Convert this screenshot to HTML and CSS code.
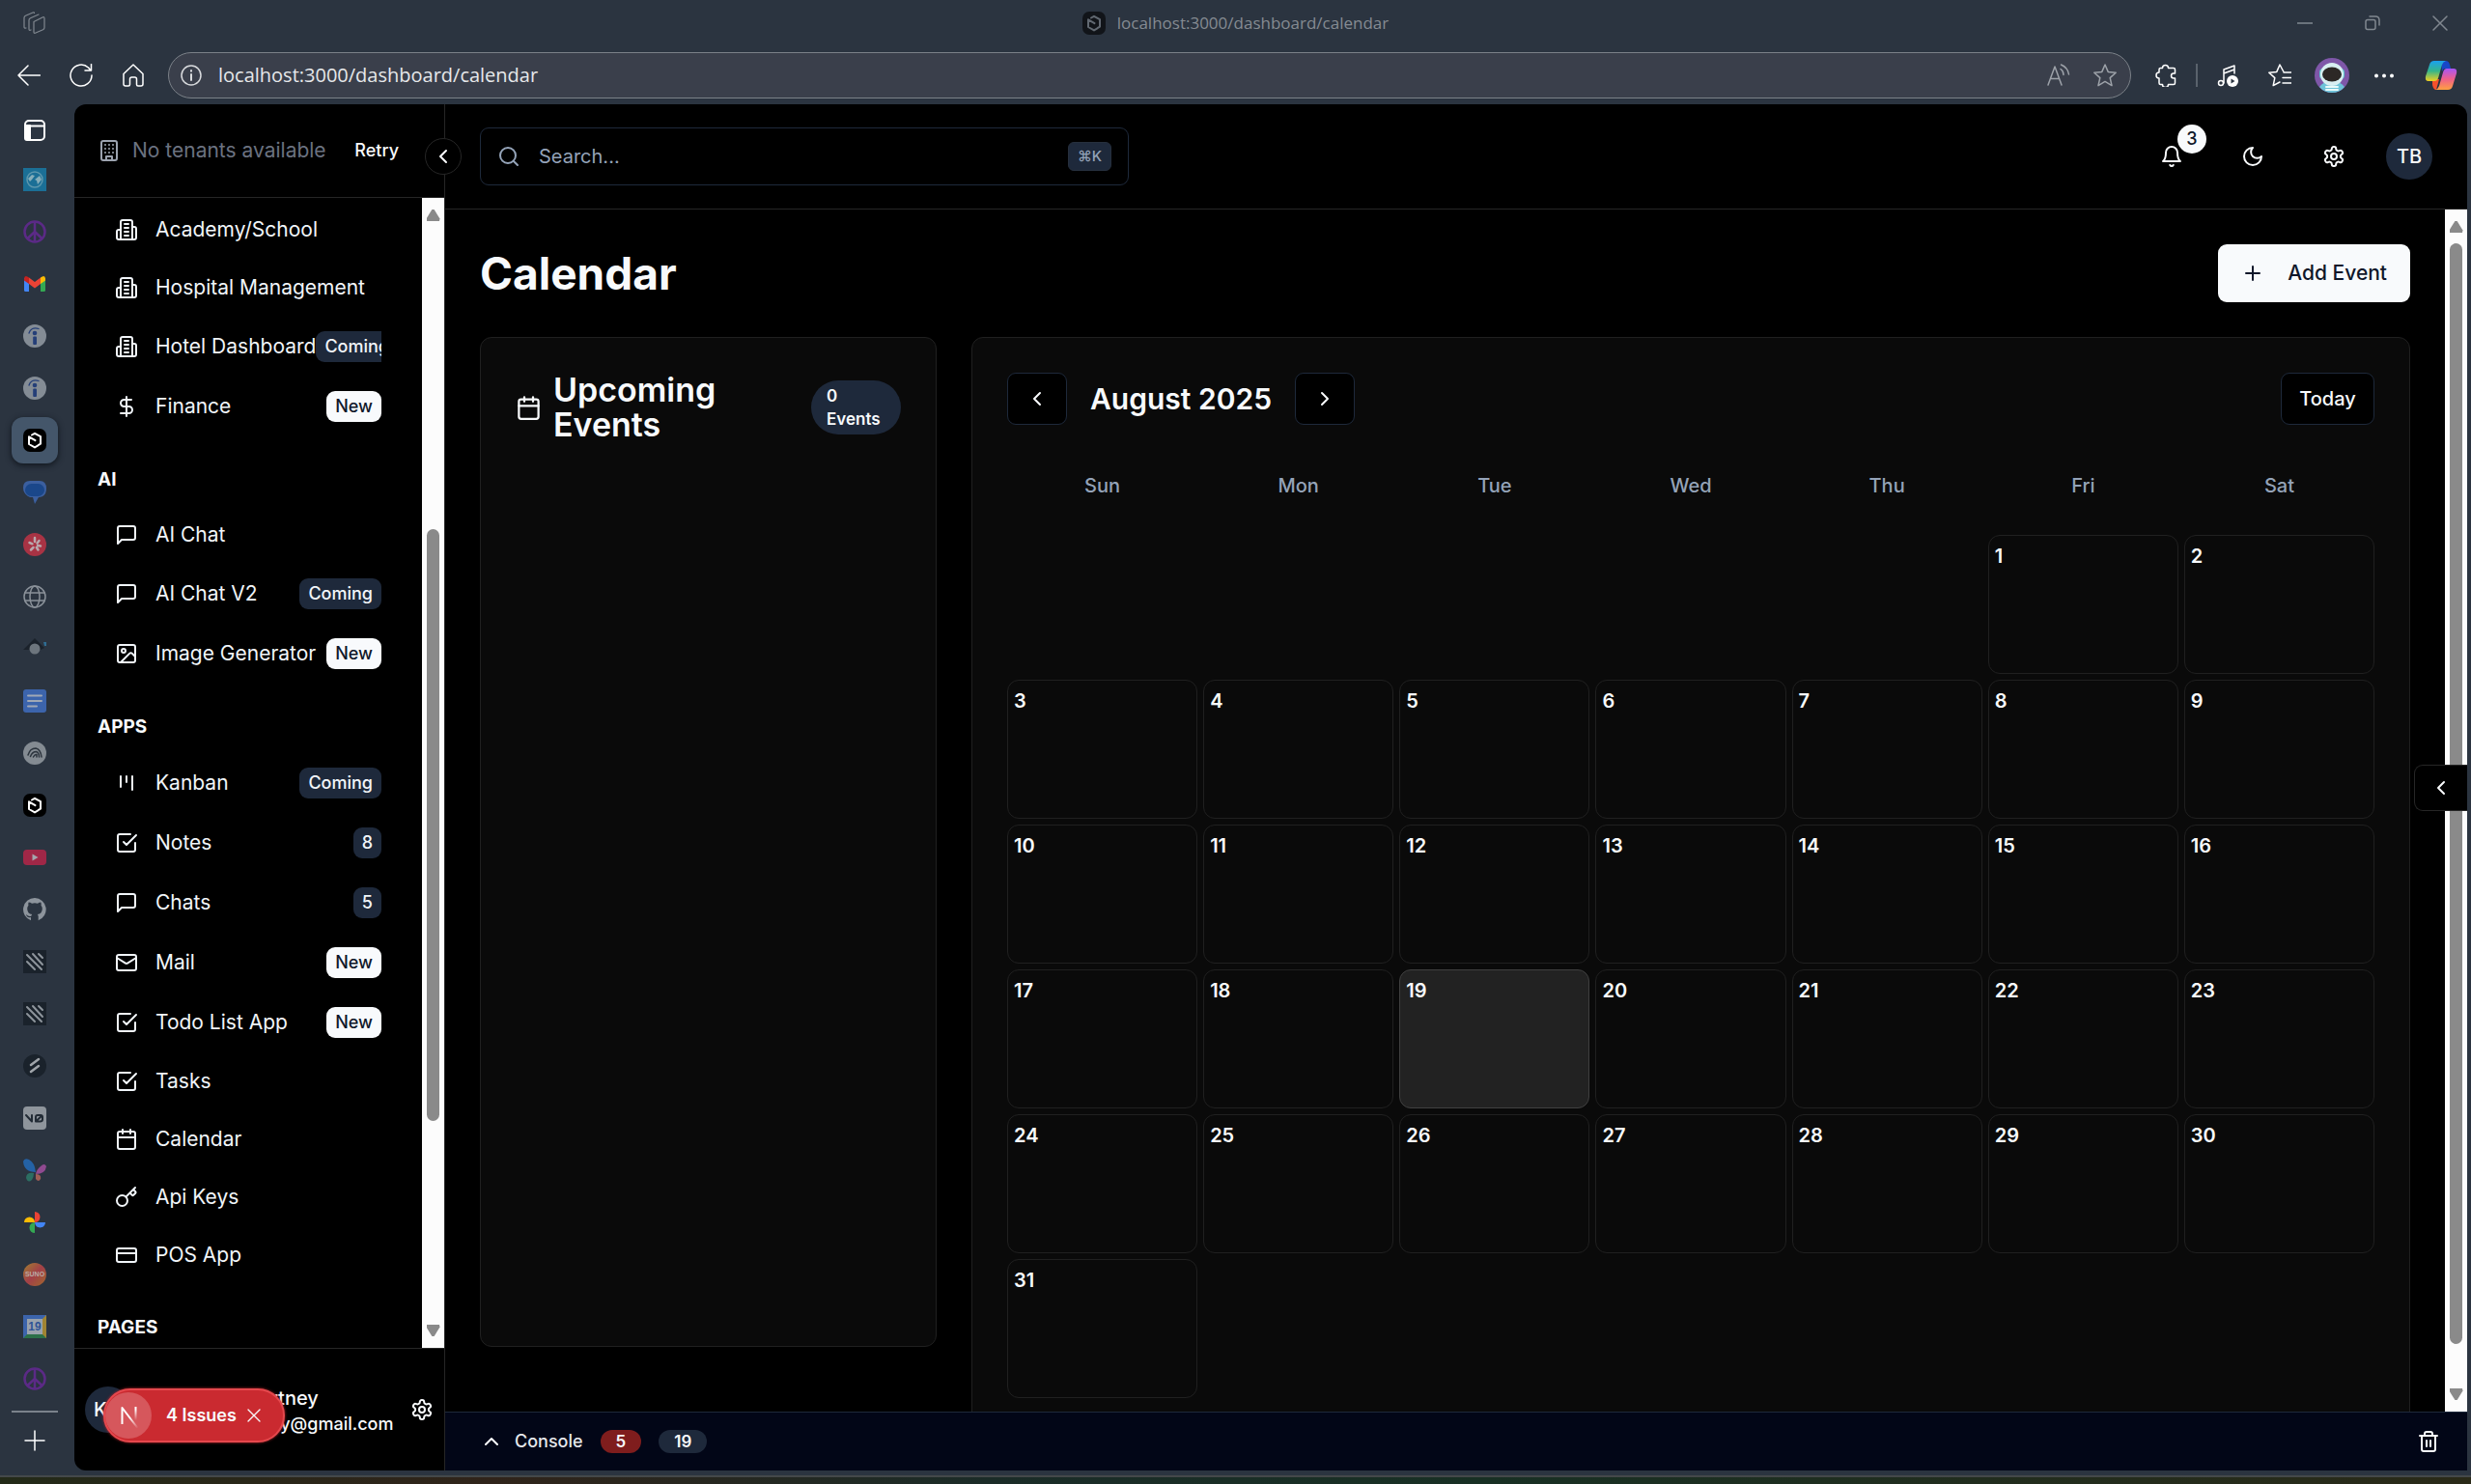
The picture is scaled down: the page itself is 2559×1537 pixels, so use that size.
FILE: index.html
```html
<!DOCTYPE html>
<html lang="en">
<head>
<meta charset="utf-8">
<title>localhost:3000/dashboard/calendar</title>
<meta name="viewport" content="width=device-width, initial-scale=1">
<link rel="stylesheet" href="styles.css">
</head>
<body>
<svg class="sprite" aria-hidden="true">
  <symbol id="building2" viewBox="0 0 24 24"><path d="M6 22V4a2 2 0 0 1 2-2h8a2 2 0 0 1 2 2v18ZM6 12H4a2 2 0 0 0-2 2v6a2 2 0 0 0 2 2h2M18 9h2a2 2 0 0 1 2 2v9a2 2 0 0 1-2 2h-2M10 6h4M10 10h4M10 14h4M10 18h4"/></symbol>
  <symbol id="building" viewBox="0 0 24 24"><rect x="4" y="2" width="16" height="20" rx="2"/><path d="M9 22v-4h6v4M8 6h.01M16 6h.01M12 6h.01M12 10h.01M12 14h.01M16 10h.01M16 14h.01M8 10h.01M8 14h.01"/></symbol>
  <symbol id="dollar" viewBox="0 0 24 24"><path d="M12 2v20M17 5H9.500a3.500 3.500 0 0 0 0 7h5a3.500 3.500 0 0 1 0 7H6"/></symbol>
  <symbol id="message" viewBox="0 0 24 24"><path d="M21 15a2 2 0 0 1-2 2H7l-4 4V5a2 2 0 0 1 2-2h14a2 2 0 0 1 2 2z"/></symbol>
  <symbol id="image" viewBox="0 0 24 24"><rect x="3" y="3" width="18" height="18" rx="2"/><circle cx="9" cy="9" r="2"/><path d="m21 15-3.086-3.086a2 2 0 0 0-2.828 0L6 21"/></symbol>
  <symbol id="kanban" viewBox="0 0 24 24"><path d="M6 5v11M12 5v6M18 5v14"/></symbol>
  <symbol id="check" viewBox="0 0 24 24"><path d="m9 11 3 3L22 4M21 12v7a2 2 0 0 1-2 2H5a2 2 0 0 1-2-2V5a2 2 0 0 1 2-2h11"/></symbol>
  <symbol id="mail" viewBox="0 0 24 24"><rect x="2" y="4" width="20" height="16" rx="2"/><path d="m22 7-8.970 5.700a1.940 1.940 0 0 1-2.060 0L2 7"/></symbol>
  <symbol id="calendar" viewBox="0 0 24 24"><path d="M8 2v4M16 2v4M3 10h18"/><rect x="3" y="4" width="18" height="18" rx="2"/></symbol>
  <symbol id="key" viewBox="0 0 24 24"><path d="m15.500 7.500 2.300 2.300a1 1 0 0 0 1.400 0l2.100-2.100a1 1 0 0 0 0-1.400L19 4M21 2l-9.600 9.600"/><circle cx="7.500" cy="15.500" r="5.500"/></symbol>
  <symbol id="card" viewBox="0 0 24 24"><rect x="2" y="5" width="20" height="14" rx="2"/><path d="M2 10h20"/></symbol>
  <symbol id="gear" viewBox="0 0 24 24"><path d="M12.22 2h-.44a2 2 0 0 0-2 2v.18a2 2 0 0 1-1 1.73l-.43.25a2 2 0 0 1-2 0l-.15-.08a2 2 0 0 0-2.73.73l-.22.38a2 2 0 0 0 .73 2.73l.15.1a2 2 0 0 1 1 1.72v.51a2 2 0 0 1-1 1.74l-.15.09a2 2 0 0 0-.73 2.73l.22.38a2 2 0 0 0 2.73.73l.15-.08a2 2 0 0 1 2 0l.43.25a2 2 0 0 1 1 1.73V20a2 2 0 0 0 2 2h.44a2 2 0 0 0 2-2v-.18a2 2 0 0 1 1-1.73l.43-.25a2 2 0 0 1 2 0l.15.08a2 2 0 0 0 2.73-.73l.22-.39a2 2 0 0 0-.73-2.73l-.15-.08a2 2 0 0 1-1-1.74v-.5a2 2 0 0 1 1-1.74l.15-.09a2 2 0 0 0 .73-2.73l-.22-.38a2 2 0 0 0-2.73-.73l-.15.08a2 2 0 0 1-2 0l-.43-.25a2 2 0 0 1-1-1.73V4a2 2 0 0 0-2-2z"/><circle cx="12" cy="12" r="3"/></symbol>
  <symbol id="bell" viewBox="0 0 24 24"><path d="M6 8a6 6 0 0 1 12 0c0 7 3 9 3 9H3s3-2 3-9M10.300 21a1.940 1.940 0 0 0 3.400 0"/></symbol>
  <symbol id="moon" viewBox="0 0 24 24"><path d="M12 3a6 6 0 0 0 9 9 9 9 0 1 1-9-9Z"/></symbol>
  <symbol id="search" viewBox="0 0 24 24"><circle cx="11" cy="11" r="8"/><path d="m21 21-4.300-4.300"/></symbol>
  <symbol id="left" viewBox="0 0 24 24"><path d="m15 18-6-6 6-6"/></symbol>
  <symbol id="right" viewBox="0 0 24 24"><path d="m9 18 6-6-6-6"/></symbol>
  <symbol id="up" viewBox="0 0 24 24"><path d="m18 15-6-6-6 6"/></symbol>
  <symbol id="plus" viewBox="0 0 24 24"><path d="M5 12h14M12 5v14"/></symbol>
  <symbol id="trash" viewBox="0 0 24 24"><path d="M3 6h18M19 6v14a2 2 0 0 1-2 2H7a2 2 0 0 1-2-2V6M8 6V4a2 2 0 0 1 2-2h4a2 2 0 0 1 2 2v2M10 11v6M14 11v6"/></symbol>
  <symbol id="cross" viewBox="0 0 24 24"><path d="M3 3l18 18M21 3 3 21"/></symbol>
  <symbol id="hex" viewBox="0 0 24 24"><rect width="24" height="24" rx="7" fill="#000" stroke="none"/><path d="M9 6.500 12 4.800l6 3.400v7.400l-2.500 1.500M15 17.600l-3 1.800-6-3.400V8.300l6.500 3.800" stroke-width="2"/></symbol>
  <symbol id="peace" viewBox="0 0 24 24"><g stroke="#5b2a86" stroke-width="2.500"><circle cx="12" cy="12" r="10.500"/><path d="M12 2v20M12 12l-7.500 7M12 12l7.500 7"/></g></symbol>
  <symbol id="indeed" viewBox="0 0 24 24"><circle cx="12" cy="12" r="12" fill="#848c95" stroke="none"/><g fill="#253f78" stroke="none"><circle cx="12" cy="9" r="2.300"/><rect x="10.200" y="12.500" width="3.800" height="8.500" rx="1"/></g><path d="M6 9c1-4 5-6.500 10-4.500" stroke="#253f78" stroke-width="1.300"/></symbol>
  <symbol id="stripes" viewBox="0 0 24 24"><path d="M0 0h24v24H0z" fill="#1a222b" stroke="none"/><path d="M4 12l8 8M4 5l15 15M10 4l10 11M16 4l4 4" stroke="#8d949b" stroke-width="2"/></symbol>
</svg>

<header class="titlebar">
  <button class="chrome-btn workspaces" aria-label="Workspaces"><svg class="ico" viewBox="0 0 24 24"><path stroke-width="1.200" d="M11 10.500 20 6q2-1 2 1v9.500q0 1.500-1.500 2.200L13 22q-2 1-2-1zM8 19q-2 1-2-1V9q0-1.500 1.500-2.200L16 3M3 17q-2 .5-2-1V6.500Q1 5 2.500 4.300L10 1q1.500-.5 1.500.5"/></svg></button>
  <div class="tab-title"><svg class="ico dim"><use href="#hex"/></svg><span>localhost:3000/dashboard/calendar</span></div>
  <div class="win-controls">
    <button class="chrome-btn" aria-label="Minimize"><svg viewBox="0 0 16 16" width="16" height="16"><path d="M0 8h16"/></svg></button>
    <button class="chrome-btn" aria-label="Restore"><svg viewBox="0 0 16 16" width="16" height="16"><rect x="1" y="4.500" width="10" height="10" rx="2"/><path d="M5 1h6q4 0 4 4v5"/></svg></button>
    <button class="chrome-btn" aria-label="Close"><svg viewBox="0 0 16 16" width="16" height="16"><path d="m1 1 14 14M15 1 1 15"/></svg></button>
  </div>
</header>

<div class="toolbar">
  <div class="tools tools-left">
    <button class="chrome-btn" aria-label="Back"><svg class="ico thin" viewBox="0 0 24 24"><path d="M23.500 12H1M11 2 1 12l10 10"/></svg></button>
    <button class="chrome-btn" aria-label="Refresh"><svg class="ico thin" viewBox="0 0 24 24"><path d="M23 12A11 11 0 1 1 19.500 4L22 7M22.500 .5V7H16"/></svg></button>
    <button class="chrome-btn" aria-label="Home"><svg class="ico thin" viewBox="0 0 24 24"><path d="M2 10.500 12 1l10 9.500V21q0 2-2 2h-3q-1.500 0-1.500-1.500V16q0-2-2-2h-3q-2 0-2 2v5.500Q8.500 23 7 23H4q-2 0-2-2z"/></svg></button>
  </div>
  <div class="address">
    <svg class="ico thin" viewBox="0 0 24 24"><circle cx="12" cy="12" r="10"/><path d="M12 11v6M12 7v.8" stroke-width="2"/></svg>
    <input class="address-input" aria-label="Address" value="localhost:3000/dashboard/calendar">
    <svg class="ico thin grey" viewBox="0 0 24 24"><path d="M1 22 8 3l7 19M3.500 15.500h9M14 5.500q3 2 3 6M14.500 1q7 3 8 10"/></svg>
    <svg class="ico thin grey" viewBox="0 0 24 24"><path d="m12 1 3.200 7.400 8 .8-6 5.400 1.800 8-7-4.200-7 4.200 1.800-8-6-5.400 8-.8z"/></svg>
  </div>
  <div class="tools tools-right">
    <button class="chrome-btn" aria-label="Extensions"><svg class="ico thin" viewBox="0 0 24 24"><path d="M8.500 4.500a3 3 0 0 1 6 0H20q1.500 0 1.500 1.500v4h-1.500a2.500 2.500 0 0 0 0 5h1.500v5q0 1.500-1.500 1.500h-5.500a3 3 0 0 1-6 0H6.500Q5 21.500 5 20v-5a3 3 0 0 1 0-6V6q0-1.500 1.500-1.500z"/></svg></button>
    <span class="tool-sep"></span>
    <button class="chrome-btn" aria-label="Media"><svg class="ico thin" viewBox="0 0 24 24"><path d="M8 20V6l11-4v8M8 10l11-4"/><circle cx="5" cy="20" r="2.500"/><circle cx="17" cy="18" r="6" fill="#fff" stroke="none"/><path d="m15.500 15.500 4 2.500-4 2.500z" fill="#2b3440" stroke="none"/></svg></button>
    <button class="chrome-btn" aria-label="Favorites"><svg class="ico thin" viewBox="0 0 24 24"><path d="M16 8.500 12 1 8.800 8.400l-8 .8 6 5.400-1.600 8L12 19M16 9h8M15 14.500h9M15 20h9"/></svg></button>
    <button class="chrome-btn profile" aria-label="Profile"><svg viewBox="0 0 36 36" width="36" height="36"><g stroke="none"><circle cx="18" cy="18" r="18" fill="#7e57a8"/><path d="M5 30q4-6 13-6t13 6q-5 6-13 6T5 30z" fill="#6ec3d8"/><rect x="5" y="11" width="26" height="11" rx="4" fill="#5fc7cf"/><circle cx="18" cy="17" r="12" fill="#d8eff2"/><ellipse cx="18" cy="17" rx="10" ry="7.500" fill="#2c2826"/></g><path d="M12 30h12M12 33h12" stroke="#e8fafa"/></svg></button>
    <button class="chrome-btn" aria-label="More"><svg class="ico" viewBox="0 0 24 24"><g fill="#fff" stroke="none"><circle cx="4" cy="12.500" r="2"/><circle cx="12" cy="12.500" r="2"/><circle cx="20" cy="12.500" r="2"/></g></svg></button>
    <button class="chrome-btn" aria-label="Copilot"><svg viewBox="0 0 34 32" width="34" height="32"><defs><linearGradient id="ca" x1="0" y1="0" x2="0" y2="1"><stop offset="0" stop-color="#1aa0f0"/><stop offset=".5" stop-color="#35b58a"/><stop offset="1" stop-color="#f0d020"/></linearGradient><linearGradient id="cb" x1="0" y1="0" x2="0" y2="1"><stop offset="0" stop-color="#a855f7"/><stop offset=".5" stop-color="#f0608a"/><stop offset="1" stop-color="#ffa040"/></linearGradient></defs><g stroke="none"><path d="M17 1h5q3 0 4 4l1 4h-6q-2 0-3 3z" fill="#1747c8"/><path d="M8 20h7l-3 11q-3 0-4-5z" fill="#f4502c"/><path d="M10 1h12q-3 1-4 4l-4 14q-1 3-4 3H4q-4 0-3-5L5 5q1-4 5-4z" fill="url(#ca)"/><path d="M24 31H11q3-1 4-4l4-14q1-4 4-4h7q4 0 3 5l-4 13q-1 4-5 4z" fill="url(#cb)"/></g></svg></button>
  </div>
</div>

<div class="window">
  <nav class="tabs" aria-label="Tabs">
    <button class="tab-toggle" aria-label="Tab actions"><svg class="ico" viewBox="0 0 24 24"><rect x="2" y="2" width="20" height="20" rx="4"/><path d="M2 7.500h20"/><path d="M2 7h5v15H4q-2 0-2-2z" fill="#fff"/></svg></button>
    <a class="tab" href="#" aria-label="Globe"><svg class="ico" viewBox="0 0 24 24"><path d="M0 0h24v24H0z" fill="#1b6f96" stroke="none"/><circle cx="12" cy="12" r="8" stroke="#5d97ad" stroke-width="1.500"/><path d="M5 11l4-4 3 1-3 4-2 2zM12 12l5-4 2 4-4 5-1-4z" fill="#86aeba" stroke="none"/></svg></a>
    <a class="tab" href="#" aria-label="Peace"><svg class="ico"><use href="#peace"/></svg></a>
    <a class="tab" href="#" aria-label="Mail"><svg class="ico" viewBox="0 0 24 24"><g stroke="none"><path d="M1 6h5v14H2.500Q1 20 1 18.500z" fill="#4285f4"/><path d="M18 6h5v12.500q0 1.500-1.500 1.500H18z" fill="#34a853"/><path d="M6 5.500 12 10l6-4.500V12l-6 4.500L6 12z" fill="#ea4335"/><path d="M1 6.500Q1.500 2 6 5.500V12L1 8.500z" fill="#c5221f"/><path d="M18 5.500Q22.500 2 23 6.500v2L18 12z" fill="#fbbc04"/></g></svg></a>
    <a class="tab" href="#" aria-label="Jobs"><svg class="ico"><use href="#indeed"/></svg></a>
    <a class="tab" href="#" aria-label="Jobs"><svg class="ico"><use href="#indeed"/></svg></a>
    <a class="tab tab-active" href="#" aria-label="Dashboard"><svg class="ico"><use href="#hex"/></svg></a>
    <a class="tab" href="#" aria-label="Messages"><svg class="ico" viewBox="0 0 24 24"><g stroke="none"><path d="M7 0h10q7 0 7 8t-7 9h-1l-4 7-2-7H7Q0 14 0 7 0 0 7 0z" fill="#3b5f9f"/><rect x="2" y="3" width="20" height="13" rx="6.500" fill="#1a478a"/></g></svg></a>
    <a class="tab" href="#" aria-label="Reviews"><svg class="ico" viewBox="0 0 24 24"><circle cx="12" cy="12" r="12" fill="#a83344" stroke="none"/><path d="M12 5v4M6.500 10l3 1.300M8 17.500l2.500-2.500M15.500 17.500l-1.700-2.500M18 13.500l-3-.5M16.500 8l-2 2.500" stroke="#b9a8ad" stroke-width="2.500"/></svg></a>
    <a class="tab" href="#" aria-label="Web"><svg class="ico" viewBox="0 0 24 24"><g stroke="#8a9199" stroke-width="1.500"><circle cx="12" cy="12" r="11"/><ellipse cx="12" cy="12" rx="5" ry="11"/><path d="M2 8h20M2 16h20"/></g></svg></a>
    <a class="tab" href="#" aria-label="Portfolio"><svg class="ico" viewBox="0 0 24 24"><path d="M0 13 12 1l10 10-4 2q-6-6-12 0z" fill="#1b222b" stroke="none"/><circle cx="12" cy="12" r="5.500" fill="#6d757d" stroke="none"/><path d="M21 5h3v4h-2z" fill="#2f6d93" stroke="none"/></svg></a>
    <a class="tab" href="#" aria-label="Documents"><svg class="ico" viewBox="0 0 24 24"><rect width="24" height="24" rx="3" fill="#3c64ac" stroke="none"/><path d="M5 6.500h14M5 12h14M5 17.500h9" stroke="#a0a8b5"/></svg></a>
    <a class="tab" href="#" aria-label="Feed"><svg class="ico" viewBox="0 0 24 24"><circle cx="12" cy="12" r="12" fill="#848b92" stroke="none"/><path d="M5 14q2-7 8-7 5 1 6 9M7.500 15.500q2-5 6-5 3 1 3 5.500M10.500 16q1.500-3 3.500-2.500v2.500" stroke="#2c343d" stroke-width="1.500"/></svg></a>
    <a class="tab" href="#" aria-label="Dashboard"><svg class="ico"><use href="#hex"/></svg></a>
    <a class="tab" href="#" aria-label="Video"><svg class="ico" viewBox="0 0 24 24"><rect y="4" width="24" height="16" rx="4" fill="#a02747" stroke="none"/><path d="m9.500 8.500 6 3.500-6 3.500z" fill="#a5a5ad" stroke="none"/></svg></a>
    <a class="tab" href="#" aria-label="Code"><svg class="ico" viewBox="0 0 24 24"><path d="M12 0a12 12 0 0 0-4 23.300V20q-4 1-5-3 3 3 5.500 1.500.2-1 .7-1.500-5-.5-5-6 0-2 1.300-3.300-.5-2 .2-3.200 1.700 0 3.300 1.300a11 11 0 0 1 6 0Q16.600 4.500 18.300 4.500q.7 1.700.2 3.200Q19.800 9 19.800 11q0 5.500-5 6 .9.900.9 2.300v4A12 12 0 0 0 12 0z" fill="#8d949c" stroke="none"/></svg></a>
    <a class="tab" href="#" aria-label="Stripes"><svg class="ico"><use href="#stripes"/></svg></a>
    <a class="tab" href="#" aria-label="Stripes"><svg class="ico"><use href="#stripes"/></svg></a>
    <a class="tab" href="#" aria-label="Slashes"><svg class="ico" viewBox="0 0 24 24"><circle cx="12" cy="12" r="12" fill="#1a222b" stroke="none"/><path d="m8 11 8-6M8 18l8-6" stroke="#a0a5aa" stroke-width="2.500"/></svg></a>
    <a class="tab" href="#" aria-label="v0"><svg class="ico" viewBox="0 0 24 24"><rect width="24" height="24" rx="4" fill="#8f959c" stroke="none"/><path d="M3 9l6 6.500V9M13 15.500h4.500q2.500 0 2.500-2V11q0-2-2-2h-3q-2 0-2 2v3zM13.500 15l6-5.500" stroke="#222b35"/></svg></a>
    <a class="tab" href="#" aria-label="Butterfly"><svg class="ico" viewBox="0 0 24 24"><g stroke="none"><path d="M0 3q1-4 6-2 6 3 7 13Q1 14 0 3z" fill="#2462a5"/><path d="M24 8q-2-4-6 0-4 3-5 8 10 0 11-8z" fill="#904a90"/><path d="M11 15q-8-1-8 5 2 6 6 2 2-3 2-7z" fill="#2c6e62"/><path d="M13 16q6 0 5 5-2 4-5 0z" fill="#a05d55"/></g></svg></a>
    <a class="tab" href="#" aria-label="Photos"><svg class="ico" viewBox="0 0 24 24"><g stroke="none"><path d="M12 1a5.500 5.500 0 0 1 0 11z" fill="#ea4335"/><path d="M23 12a5.500 5.500 0 0 1-11 0z" fill="#4285f4"/><path d="M12 23a5.500 5.500 0 0 1 0-11z" fill="#34a853"/><path d="M1 12a5.500 5.500 0 0 1 11 0z" fill="#fbbc04"/></g></svg></a>
    <a class="tab tab-suno" href="#"><span>SUNO</span></a>
    <a class="tab tab-day" href="#"><span>19</span></a>
    <a class="tab" href="#" aria-label="Peace"><svg class="ico"><use href="#peace"/></svg></a>
    <span class="tab-sep"></span>
    <button class="tab-new" aria-label="New tab"><svg class="ico thin" viewBox="0 0 24 24"><path d="M12 2v20M2 12h20"/></svg></button>
  </nav>

  <div class="page">
    <aside class="sidebar">
      <div class="tenant">
        <svg class="ico muted"><use href="#building"/></svg>
        <span class="tenant-text">No tenants available</span>
        <button class="retry">Retry</button>
      </div>
      <button class="collapse" aria-label="Collapse sidebar"><svg class="ico"><use href="#left"/></svg></button>
      <div class="nav-wrap">
        <nav class="nav">
          <a class="nav-item" href="#"><svg class="ico"><use href="#building2"/></svg><span>Academy/School</span></a>
          <a class="nav-item" href="#"><svg class="ico"><use href="#building2"/></svg><span>Hospital Management</span></a>
          <a class="nav-item" href="#"><svg class="ico"><use href="#building2"/></svg><span>Hotel Dashboard</span><b class="tag">Coming</b></a>
          <a class="nav-item" href="#"><svg class="ico"><use href="#dollar"/></svg><span>Finance</span><b class="tag tag-new">New</b></a>
          <h2 class="nav-title">AI</h2>
          <a class="nav-item" href="#"><svg class="ico"><use href="#message"/></svg><span>AI Chat</span></a>
          <a class="nav-item" href="#"><svg class="ico"><use href="#message"/></svg><span>AI Chat V2</span><b class="tag">Coming</b></a>
          <a class="nav-item" href="#"><svg class="ico"><use href="#image"/></svg><span>Image Generator</span><b class="tag tag-new">New</b></a>
          <h2 class="nav-title">APPS</h2>
          <a class="nav-item" href="#"><svg class="ico"><use href="#kanban"/></svg><span>Kanban</span><b class="tag">Coming</b></a>
          <a class="nav-item" href="#"><svg class="ico"><use href="#check"/></svg><span>Notes</span><b class="tag">8</b></a>
          <a class="nav-item" href="#"><svg class="ico"><use href="#message"/></svg><span>Chats</span><b class="tag">5</b></a>
          <a class="nav-item" href="#"><svg class="ico"><use href="#mail"/></svg><span>Mail</span><b class="tag tag-new">New</b></a>
          <a class="nav-item" href="#"><svg class="ico"><use href="#check"/></svg><span>Todo List App</span><b class="tag tag-new">New</b></a>
          <a class="nav-item" href="#"><svg class="ico"><use href="#check"/></svg><span>Tasks</span></a>
          <a class="nav-item" href="#"><svg class="ico"><use href="#calendar"/></svg><span>Calendar</span></a>
          <a class="nav-item" href="#"><svg class="ico"><use href="#key"/></svg><span>Api Keys</span></a>
          <a class="nav-item" href="#"><svg class="ico"><use href="#card"/></svg><span>POS App</span></a>
          <h2 class="nav-title">PAGES</h2>
        </nav>
        <div class="scroll" aria-hidden="true"><i class="arrow-up"></i><div class="track track-nav"><i class="thumb"></i></div><i class="arrow-down"></i></div>
      </div>
      <div class="user">
        <span class="avatar user-avatar">K</span>
        <div class="user-text"><span class="user-name">rtney</span><span class="user-mail">ey@gmail.com</span></div>
        <button class="icon-plain" aria-label="Account settings"><svg class="ico"><use href="#gear"/></svg></button>
        <div class="issues">
          <button class="next-mark" aria-label="Dev tools"><svg viewBox="0 0 48 48" width="48" height="48"><defs><linearGradient id="n1" gradientUnits="userSpaceOnUse" x1="26" y1="26" x2="34" y2="37"><stop offset="0" stop-color="#fff"/><stop offset="1" stop-color="#fff" stop-opacity="0"/></linearGradient><linearGradient id="n2" gradientUnits="userSpaceOnUse" x1="32" y1="15" x2="32" y2="29"><stop offset=".2" stop-color="#fff"/><stop offset="1" stop-color="#fff" stop-opacity="0"/></linearGradient></defs><g stroke-linecap="butt"><path d="M17.500 33V16l16 21" stroke="url(#n1)"/><path d="M31.500 15v14" stroke="url(#n2)"/></g></svg></button>
          <span>4 Issues</span>
          <button class="issues-close" aria-label="Close"><svg viewBox="0 0 24 24" width="16" height="16"><use href="#cross"/></svg></button>
        </div>
      </div>
    </aside>

    <div class="content">
      <header class="topbar">
        <div class="search">
          <svg class="ico"><use href="#search"/></svg>
          <input class="search-input" type="text" aria-label="Search" placeholder="Search...">
          <kbd class="kbd">⌘K</kbd>
        </div>
        <div class="actions">
          <button class="icon-btn" aria-label="Notifications"><svg class="ico"><use href="#bell"/></svg><span class="count">3</span></button>
          <button class="icon-btn" aria-label="Theme"><svg class="ico"><use href="#moon"/></svg></button>
          <button class="icon-btn" aria-label="Settings"><svg class="ico"><use href="#gear"/></svg></button>
          <button class="avatar">TB</button>
        </div>
      </header>

      <div class="body-wrap">
        <main class="main">
          <div class="page-head">
            <h1>Calendar</h1>
            <button class="add"><svg class="ico"><use href="#plus"/></svg>Add Event</button>
          </div>
          <div class="cards">
            <section class="card upcoming">
              <div class="upcoming-head">
                <svg class="cal-ico"><use href="#calendar"/></svg>
                <h2>Upcoming Events</h2>
                <span class="events-badge">0 Events</span>
              </div>
            </section>
            <section class="card month">
              <div class="month-head">
                <button class="btn btn-arrow" aria-label="Previous month"><svg class="ico"><use href="#left"/></svg></button>
                <h2>August 2025</h2>
                <button class="btn btn-arrow" aria-label="Next month"><svg class="ico"><use href="#right"/></svg></button>
                <button class="btn btn-today">Today</button>
              </div>
              <table class="days">
                <thead><tr><th>Sun</th><th>Mon</th><th>Tue</th><th>Wed</th><th>Thu</th><th>Fri</th><th>Sat</th></tr></thead>
                <tbody>
                  <tr><td class="none" colspan="5"></td><td>1</td><td>2</td></tr>
                  <tr><td>3</td><td>4</td><td>5</td><td>6</td><td>7</td><td>8</td><td>9</td></tr>
                  <tr><td>10</td><td>11</td><td>12</td><td>13</td><td>14</td><td>15</td><td>16</td></tr>
                  <tr><td>17</td><td>18</td><td class="now">19</td><td>20</td><td>21</td><td>22</td><td>23</td></tr>
                  <tr><td>24</td><td>25</td><td>26</td><td>27</td><td>28</td><td>29</td><td>30</td></tr>
                  <tr><td>31</td><td class="none" colspan="6"></td></tr>
                </tbody>
              </table>
            </section>
          </div>
        </main>
        <div class="scroll" aria-hidden="true"><i class="arrow-up"></i><div class="track track-main"><i class="thumb"></i></div><i class="arrow-down"></i></div>
      </div>

      <footer class="console">
        <svg class="ico"><use href="#up"/></svg>
        <span>Console</span>
        <b class="pill pill-red">5</b>
        <b class="pill">19</b>
        <button class="icon-plain trash" aria-label="Clear console"><svg class="ico"><use href="#trash"/></svg></button>
      </footer>
      <button class="side-tab" aria-label="Open panel"><svg class="ico"><use href="#left"/></svg></button>
    </div>
  </div>
</div>
<div class="desktop"></div>
</body>
</html>
```
FILE: styles.css
```css
* { box-sizing: border-box; }
html, body { height: 100%; }
body {
  margin: 0;
  display: flex;
  flex-direction: column;
  overflow: hidden;
  background: #2b3440;
  color: #f8fafc;
  font-family: Inter, "Liberation Sans", sans-serif;
  font-size: 20px;
  line-height: 30px;
}
h1, h2 { margin: 0; }
button { margin: 0; padding: 0; border: 0; background: none; color: inherit; font: inherit; }
a { color: inherit; text-decoration: none; }
svg { display: block; fill: none; stroke: currentColor; stroke-width: 2; stroke-linecap: round; stroke-linejoin: round; flex: none; }
.sprite { position: absolute; width: 0; height: 0; }
.ico { width: 24px; height: 24px; }
.thin { stroke-width: 1.5; }
.dim { opacity: .6; }
.grey { color: #9da2a9; }

/* Browser window */
.titlebar { flex: none; height: 48px; display: grid; grid-template-columns: 1fr auto 1fr; align-items: center; padding: 0 24px; color: #818890; font: 17px/24px "Open Sans", "Noto Sans", sans-serif; }
.workspaces { width: 24px; }
.tab-title { display: flex; align-items: center; gap: 12px; color: #858b92; }
.win-controls { display: flex; gap: 54px; justify-content: flex-end; }
.win-controls svg { stroke-width: 1.5; }
.toolbar { flex: none; height: 60px; display: flex; align-items: center; padding: 0 14px 0 18px; color: #fff; }
.tools { display: flex; align-items: center; }
.tools-left { gap: 30px; margin-right: 24px; }
.tools-right { gap: 30px; margin-left: 24px; }
.tool-sep { width: 2px; height: 24px; margin: 0 -11px; background: #5a626c; }
.profile { margin: 0 -6px; }
.address { flex: 1; height: 48px; display: flex; align-items: center; gap: 24px; padding: 0 14px 0 11px; border: 1px solid #7b8188; border-radius: 24px; background: #3a3f4b; color: #d8dadd; }
.address-input { flex: 1; margin-left: -8px; padding: 0; border: 0; outline: 0; background: none; color: #e6e8ea; font: 20px/30px "Open Sans", "Noto Sans", sans-serif; }
.window { flex: 1; min-height: 0; display: flex; padding: 0 4px 5px 0; }
.tabs { flex: none; width: 77px; display: flex; flex-direction: column; padding-left: 12px; gap: 6px; }
.tabs > * { flex: none; width: 48px; }
.tab, .tab-toggle, .tab-new { height: 48px; display: flex; align-items: center; justify-content: center; color: #fff; }
.tab-toggle { height: 54px; margin-bottom: -6px; }
.tab-active { border-radius: 12px; background: #44566a; box-shadow: 0 2px 6px #10161d; }
.tab-sep { height: 2px; margin-top: 3px; background: #7b828b; }
.tab-new { height: 46px; }
.tab-suno span { width: 24px; height: 24px; border-radius: 50%; background: linear-gradient(135deg, #a08030, #a24048, #a0682c); color: #b9aaa5; font: bold 7px/24px "Liberation Sans", sans-serif; text-align: center; }
.tab-day span { width: 24px; height: 24px; border: 4px solid; border-color: #3c64ac #a08432 #2c7049 #3c64ac; background: #9aa3ad; color: #2f5496; font: bold 12px/16px "Liberation Sans", sans-serif; text-align: center; }
.desktop { flex: none; height: 9px; border-top: 2px solid #44484a; background: linear-gradient(90deg, #232a18, #30241a 20%, #1b2c28 40%, #183024 60%, #2a2a18); }

/* App frame */
.page { flex: 1; min-width: 0; display: flex; overflow: hidden; border-radius: 12px 12px 0 12px; background: #000; }
.sidebar { position: relative; flex: none; width: 384px; display: flex; flex-direction: column; border-right: 1px solid #262626; }
.tenant { flex: none; height: 97px; display: flex; align-items: center; padding: 0 47px 0 24px; border-bottom: 1px solid #262626; }
.muted { color: #9ca3af; }
.tenant-text { margin: 0 auto 0 12px; color: #6b7280; font-size: 21px; white-space: nowrap; }
.retry { font-size: 18px; font-weight: 500; }
.collapse { position: absolute; z-index: 2; top: 35px; right: -18px; width: 38px; height: 38px; display: grid; place-items: center; border: 1px solid #262626; border-radius: 50%; background: #000; }
.nav-wrap { flex: 1; min-height: 0; display: flex; }
.nav { flex: 1; min-width: 0; overflow: hidden; padding: 3px 42px 0 24px; font-size: 21px; }
.nav-item { display: flex; align-items: center; padding: 15px 0 15px 18px; overflow: hidden; color: #f1f5f9; }
.nav-item span { margin: 0 auto 0 18px; white-space: nowrap; }
.nav-title { margin: 33px 0 15px; font-size: 19px; line-height: 24px; font-weight: 700; }
.tag { flex: none; height: 32px; padding: 0 9px; border-radius: 9px; background: #1e293b; font-size: 18px; line-height: 32px; font-weight: 500; }
.tag-new { background: #f8fafc; color: #0f172a; }
.user { position: relative; flex: none; height: 127px; display: flex; align-items: center; padding: 0 11px; border-top: 1px solid #262626; }
.avatar { flex: none; width: 48px; height: 48px; border-radius: 50%; background: #1e293b; font-weight: 500; line-height: 48px; text-align: center; }
.user-avatar { padding-left: 9px; text-align: left; }
.user-text { flex: 1; margin-left: 144px; display: flex; flex-direction: column; font-weight: 500; white-space: nowrap; }
.user-name { line-height: 30px; }
.user-mail { font-size: 18px; line-height: 24px; }
.issues { position: absolute; left: 30px; top: 41px; width: 188px; height: 56px; display: flex; align-items: center; padding: 0 12px 0 0; border: 2px solid #e5484d; border-radius: 28px; background: #ca2a30; font-size: 18px; font-weight: 600; white-space: nowrap; box-shadow: 0 0 3px #ca2a30; }
.next-mark { width: 48px; height: 48px; border-radius: 50%; background: #d6575c; margin-right: 15px; flex: none; }
.issues-close { margin: 0 auto; }

.content { position: relative; flex: 1; min-width: 0; display: flex; flex-direction: column; }
.topbar { flex: none; height: 109px; display: flex; align-items: center; justify-content: space-between; padding: 0 36px; border-bottom: 1px solid #262626; }
.search { width: 672px; height: 60px; display: flex; align-items: center; padding: 0 17px; border: 1px solid #1e293b; border-radius: 9px; color: #94a3b8; }
.search-input { flex: 1; margin: 0 18px 0 19px; padding: 0; border: 0; outline: 0; background: none; color: inherit; font: inherit; }
.search-input::placeholder { color: #94a3b8; opacity: 1; }
.kbd { width: 45px; height: 30px; border: 1px solid #262f3d; border-radius: 6px; background: #1e293b; font: 500 15px/28px Inter, "DejaVu Sans", sans-serif; text-align: center; }
.actions { display: flex; align-items: center; gap: 24px; }
.icon-btn { position: relative; width: 60px; height: 60px; display: grid; place-items: center; }
.count { position: absolute; top: -3px; right: -6px; width: 30px; height: 30px; border-radius: 50%; background: #f8fafc; color: #0f172a; font-size: 18px; font-weight: 500; text-align: center; }

.body-wrap { flex: 1; min-height: 0; display: flex; }
.main { flex: 1; min-width: 0; overflow: hidden; padding: 36px; }
.page-head { display: flex; align-items: center; justify-content: space-between; margin-bottom: 36px; }
h1 { font-size: 46px; line-height: 58px; font-weight: 700; }
.add { height: 60px; display: flex; align-items: center; gap: 24px; padding: 0 24px; border-radius: 9px; background: #f8fafc; color: #0f172a; font-size: 21px; font-weight: 500; }
.cards { display: grid; grid-template-columns: 473fr 1490fr; gap: 36px; align-items: start; }
.card { border: 1px solid #202020; border-radius: 12px; background: #0a0a0a; padding: 36px; }
.upcoming { height: 1046px; }
.upcoming-head { display: flex; align-items: center; }
.cal-ico { width: 27px; height: 27px; margin-right: 12px; }
.upcoming-head h2 { flex: 1; font-size: 34px; line-height: 36px; font-weight: 600; }
.events-badge { width: 93px; padding: 4px 16px; border-radius: 28px; background: #1e293b; font-size: 17px; line-height: 24px; font-weight: 600; }
.month-head { display: flex; align-items: center; gap: 24px; }
.month-head h2 { font-size: 30px; line-height: 54px; font-weight: 600; }
.btn { height: 54px; border: 1px solid #1e293b; border-radius: 9px; background: #000; font-weight: 500; }
.btn-arrow { width: 62px; display: grid; place-items: center; }
.btn-today { margin-left: auto; width: 97px; }
.days { width: calc(100% + 12px); margin: 30px -6px 0; border-collapse: separate; border-spacing: 6px; table-layout: fixed; }
.days th { height: 72px; padding: 0 0 18px; color: #94a3b8; font-weight: 500; text-align: center; vertical-align: middle; }
.days td { height: 144px; padding: 6px; border: 1px solid #202020; border-radius: 12px; font-weight: 600; vertical-align: top; }
.days .none { border-color: transparent; }
.days .now { background: #222; border-color: #404040; }

.scroll { flex: none; width: 23px; display: flex; flex-direction: column; align-items: center; padding: 12px 0; gap: 11px; background: #fcfcfc; }
.arrow-up, .arrow-down { flex: none; width: 14px; height: 12px; background: #8a8a8a; }
.arrow-up { clip-path: polygon(42% 0, 58% 0, 100% 80%, 96% 100%, 4% 100%, 0 80%); }
.arrow-down { clip-path: polygon(42% 100%, 58% 100%, 100% 20%, 96% 0, 4% 0, 0 20%); }
.track { flex: 1; display: flex; flex-direction: column; width: 13px; }
.thumb { border-radius: 7px; background: #8a8a8a; }
.track-nav::before { content: ""; flex: 308; }
.track-nav .thumb { flex: 613; }
.track-nav::after { content: ""; flex: 200; }
.track-main .thumb { flex: none; height: 97%; }

.console { flex: none; height: 61px; display: flex; align-items: center; gap: 18px; padding: 0 28px 0 36px; border-top: 1px solid #1e293b; background: #020617; font-size: 18px; font-weight: 500; }
.console > span { margin-left: -6px; color: #e5e7eb; }
.pill { height: 24px; padding: 0 16px; border-radius: 12px; background: #1e293b; font-size: 17px; line-height: 24px; font-weight: 600; }
.pill-red { background: #7f1d1d; }
.trash { margin-left: auto; }
.side-tab { position: absolute; right: 0; top: 684px; width: 55px; height: 48px; display: grid; place-items: center; border: 1px solid #262626; border-right: 0; border-radius: 9px 0 0 9px; background: #000; }
```
